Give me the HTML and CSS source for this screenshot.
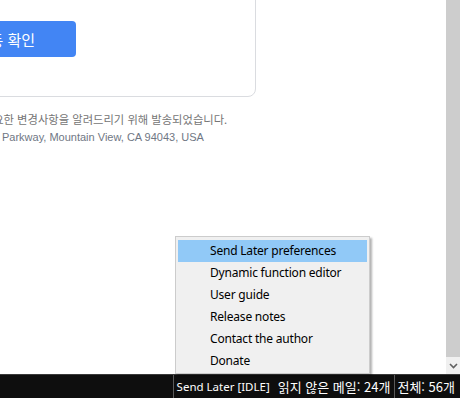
FILE: index.html
```html
<!DOCTYPE html>
<html lang="ko">
<head>
    <meta charset="UTF-8">
    <meta name="viewport" content="width=device-width, initial-scale=1.0">
    <title>메일 보기</title>
    <link rel="stylesheet" href="styles.css">
</head>
<body>
    <div class="screen">
        <div class="viewer">
            <div class="mail-area">
                <div class="mail">
                    <div class="card">
                        <a class="btn" href="#">활동 확인</a>
                    </div>
                    <div class="mail-foot">
                        <p class="notice">이 이메일은 Google 계정 및 서비스의 중요한 변경사항을 알려드리기 위해 발송되었습니다.</p>
                        <p class="address">© 2023 Google LLC, 1600 Amphitheatre Parkway, Mountain View, CA 94043, USA</p>
                    </div>
                </div>
            </div>
            <div class="scrollbar">
                <div class="thumb"></div>
                <div class="arrow">
                    <svg width="9" height="6" viewBox="0 0 9 6"><path d="M1 1l3.5 3.5L8 1" fill="none" stroke="#606060" stroke-width="1.6"/></svg>
                </div>
            </div>
        </div>

        <footer class="status">
            <div class="status-fill"></div>
            <div class="status-seg">
                <span class="status-app">Send Later [IDLE]</span>
                <span>읽지 않은 메일: 24개</span>
            </div>
            <div class="status-seg last">
                <span>전체: 56개</span>
            </div>
        </footer>

        <ul class="menu">
            <li class="active">Send Later preferences</li>
            <li>Dynamic function editor</li>
            <li>User guide</li>
            <li>Release notes</li>
            <li>Contact the author</li>
            <li>Donate</li>
        </ul>
    </div>
</body>
</html>
```

FILE: styles.css
```css
body {
    margin: 0;
    padding: 0;
    background-color: #fff;
    font-family: "Noto Sans", "Noto Sans CJK KR", sans-serif;
    overflow: hidden;
}
.screen {
    position: relative;
    width: 460px;
    height: 398px;
    display: flex;
    flex-direction: column;
}
.viewer {
    display: flex;
    height: 374px;
}
.mail-area {
    flex: 1;
    overflow: hidden;
}
.mail {
    width: 516px;
    margin-left: -260px;
}
.card {
    margin-top: -20px;
    padding: 40px 0 39px;
    border: 1px solid #dadce0;
    border-radius: 8px;
    display: flex;
}
.btn {
    margin-left: auto;
    margin-right: 179px;
    height: 36px;
    padding: 0 41px 0 60px;
    display: flex;
    align-items: center;
    background-color: #4285f4;
    border-radius: 4px;
    color: white;
    text-decoration: none;
    font-family: "Noto Sans CJK KR", sans-serif;
    font-size: 15px;
}
.mail-foot {
    padding-top: 13px;
    margin-left: 11px;
    text-align: center;
    font-family: "Liberation Sans", Arial, "Noto Sans CJK KR", sans-serif;
    font-size: 11px;
}
.mail-foot p {
    margin: 0;
    line-height: 18px;
    white-space: nowrap;
}
.notice {
    padding-left: 22px;
    color: #757575;
    font-family: "Noto Sans CJK KR", sans-serif;
    font-size: 11.3px;
}
.address {
    color: #707784;
}
.scrollbar {
    width: 14px;
    display: flex;
    flex-direction: column;
}
.thumb {
    flex: 1;
    background-color: #cdcdcd;
}
.arrow {
    height: 17px;
    background-color: #f0f0f0;
    display: flex;
    align-items: center;
    justify-content: center;
}
.status {
    height: 24px;
    display: flex;
    background-color: #0e0e0e;
    border-top: 1px solid #3a3a3a;
    box-sizing: border-box;
    color: white;
    font-family: "Noto Sans CJK KR", sans-serif;
    font-size: 13px;
}
.status-fill {
    flex: 1;
}
.status-seg {
    display: flex;
    align-items: center;
    gap: 8px;
    padding: 0 4px 0 3px;
    border-left: 1px solid #5a5a5a;
}
.status-seg.last {
    padding: 0 5px 0 2px;
}
.status-app {
    font-family: "Noto Sans", sans-serif;
    font-size: 11.5px;
}
.menu {
    position: absolute;
    left: 175px;
    top: 236px;
    width: 193px;
    margin: 0;
    padding: 3px 0 1px;
    list-style: none;
    background-color: #f0f0f0;
    border: 1px solid #cccccc;
    box-shadow: 2px 2px 2px rgba(0, 0, 0, 0.3);
    font-family: "Noto Sans", sans-serif;
    font-size: 12px;
    letter-spacing: -0.2px;
    color: #000;
    z-index: 2;
}
.menu li {
    height: 22px;
    line-height: 22px;
    margin: 0 2px;
    padding-left: 32px;
}
.menu li.active {
    background-color: #91c9f7;
}
```
